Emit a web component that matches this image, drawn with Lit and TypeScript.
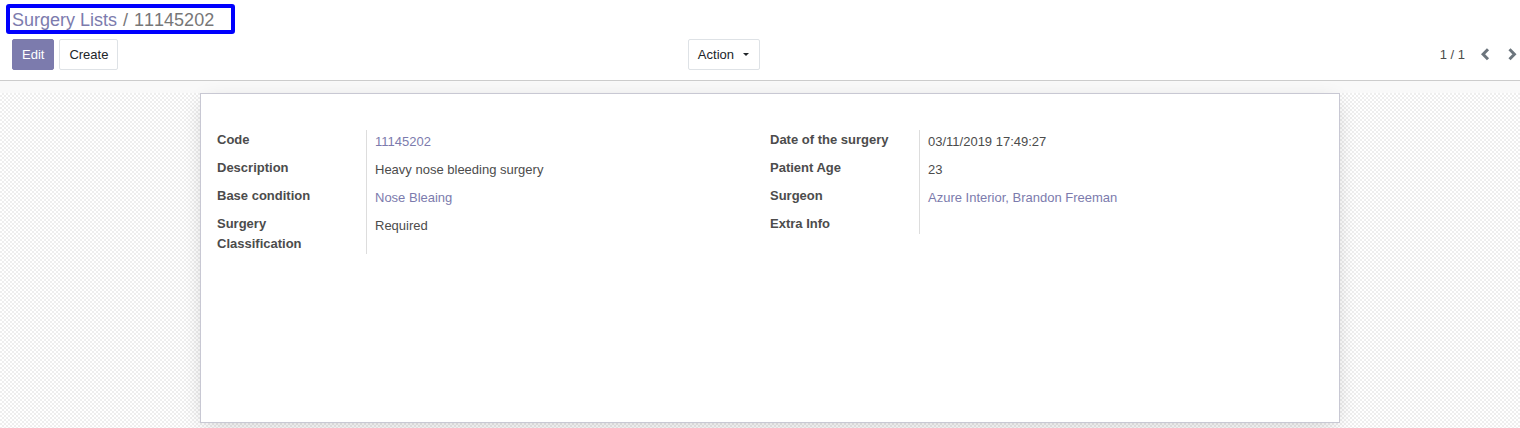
import { LitElement, html, css, nothing } from "lit";
import { customElement, property } from "lit/decorators.js";

interface Field {
  label: string;
  value: string;
  link?: boolean;
}

const LEFT: Field[] = [
  { label: "Code", value: "11145202", link: true },
  { label: "Description", value: "Heavy nose bleeding surgery" },
  { label: "Base condition", value: "Nose Bleaing", link: true },
  { label: "Surgery Classification", value: "Required" },
];

const RIGHT: Field[] = [
  { label: "Date of the surgery", value: "03/11/2019 17:49:27" },
  { label: "Patient Age", value: "23" },
  { label: "Surgeon", value: "Azure Interior, Brandon Freeman", link: true },
  { label: "Extra Info", value: "" },
];

@customElement("field-group")
export class FieldGroup extends LitElement {
  @property({ attribute: false }) fields: Field[] = [];

  static styles = css`
    .group {
      display: grid;
      grid-template-columns: 149px 1fr;
      margin: 0;
    }
    .label {
      padding: 0 24px 8px 0;
      font-weight: bold;
    }
    .value {
      margin: 0;
      padding: 2px 8px 6px;
      border-left: 1px solid #ddd;
    }
    .label:last-of-type,
    .value:last-of-type {
      padding-bottom: 0;
    }
    .link {
      color: #7c7bad;
      text-decoration: none;
    }
  `;

  render() {
    return html`<dl class="group">
      ${this.fields.map(
        (f) => html`<dt class="label">${f.label}</dt>
          <dd class="value">
            ${f.link ? html`<a class="link" href="#">${f.value}</a>` : f.value || nothing}
          </dd>`
      )}
    </dl>`;
  }
}

@customElement("app-root")
export class AppRoot extends LitElement {
  static styles = css`
    :host {
      display: flex;
      flex-direction: column;
      min-height: 100vh;
      overflow: hidden;
      box-sizing: border-box;
      font: 13px/20px "Liberation Sans", Arial, sans-serif;
      color: #4c4c4c;
      background: #fff;
    }
    .panel {
      padding: 4px 0 10px;
      border-bottom: 1px solid #ccc;
    }
    .crumbs {
      display: flex;
      gap: 6px;
      width: fit-content;
      margin-left: 6px;
      padding: 0 17px 0 2px;
      border: 4px solid #0000fe;
      border-radius: 3px;
      font-size: 18px;
      font-kerning: none;
      line-height: 24px;
      height: 22px;
      color: #777;
    }
    .link {
      color: #7c7bad;
      text-decoration: none;
    }
    .bar {
      display: grid;
      grid-template-columns: 1fr 1fr;
      align-items: center;
      margin-top: 5px;
    }
    .side {
      display: flex;
      align-items: center;
      justify-content: space-between;
      padding-left: 12px;
    }
    .buttons {
      display: flex;
      gap: 5px;
    }
    .btn {
      display: flex;
      align-items: center;
      gap: 9px;
      height: 31px;
      padding: 0 9px;
      border: 1px solid #dee2e6;
      border-radius: 2px;
      background: #fff;
      color: #212529;
      font: inherit;
    }
    .primary {
      background: #7c7bad;
      border-color: #7c7bad;
      color: #fff;
    }
    .caret {
      border: 3px solid transparent;
      border-top-color: #212529;
      border-bottom: 0;
      margin-right: 1px;
    }
    .pager {
      display: flex;
      align-items: center;
      justify-content: flex-end;
      gap: 16px;
      padding-right: 3px;
    }
    .arrows {
      display: flex;
      gap: 18px;
    }
    .arrow {
      display: flex;
      padding: 0;
      border: 0;
      background: none;
      color: #6c757d;
    }
    .content {
      flex: 1;
      padding: 12px 0 5px 20px;
      background:
        linear-gradient(#f9f9f9, #f9f9f9) 0 0 / 100% 12px no-repeat,
        repeating-conic-gradient(#eee 0 25%, #fff 0 50%) 0 0 / 4px 4px;
    }
    .sheet {
      display: grid;
      grid-template-columns: 1fr 1fr;
      align-items: start;
      box-sizing: border-box;
      max-width: 1140px;
      min-height: 330px;
      margin: 0 auto;
      padding: 36px 16px;
      border: 1px solid #c8c8d3;
      background: #fff;
      box-shadow: 0 5px 20px -5px rgba(0, 0, 0, 0.2);
    }
  `;

  render() {
    return html`
      <header class="panel">
        <nav class="crumbs" aria-label="Breadcrumb">
          <a class="link" href="#">Surgery Lists</a><span>/</span><span>11145202</span>
        </nav>
        <div class="bar">
          <div class="side">
            <div class="buttons">
              <button class="btn primary">Edit</button>
              <button class="btn">Create</button>
            </div>
            <button class="btn" aria-haspopup="true">Action<span class="caret"></span></button>
          </div>
          <div class="pager">
            <span>1 / 1</span>
            <div class="arrows">
              <button class="arrow" aria-label="Previous">
                <svg width="9" height="14" viewBox="0 0 9 14" fill="none" stroke="currentColor" stroke-width="3">
                  <path d="M7 1.2 2.1 6.2l4.9 5" />
                </svg>
              </button>
              <button class="arrow" aria-label="Next">
                <svg width="9" height="14" viewBox="0 0 9 14" fill="none" stroke="currentColor" stroke-width="3">
                  <path d="M1.5 1.2 6.4 6.2l-4.9 5" />
                </svg>
              </button>
            </div>
          </div>
        </div>
      </header>
      <main class="content">
        <section class="sheet">
          <field-group .fields=${LEFT}></field-group>
          <field-group .fields=${RIGHT}></field-group>
        </section>
      </main>
    `;
  }
}
